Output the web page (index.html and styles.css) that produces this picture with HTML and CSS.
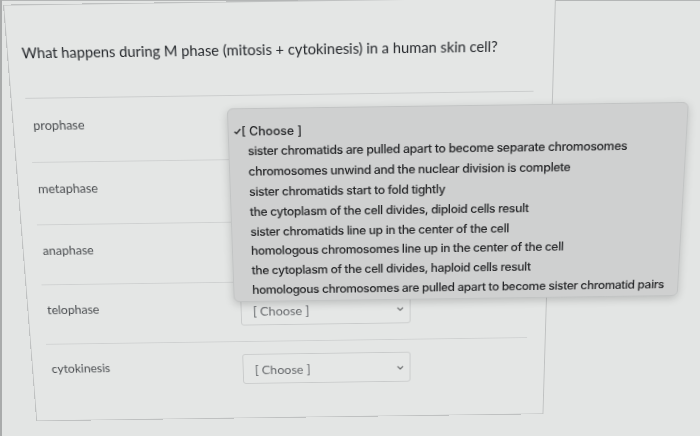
FILE: index.html
```html
<!DOCTYPE html>
<html>
<head>
<meta charset="utf-8">
<link rel="stylesheet" href="styles.css">
</head>
<body>
<div class="page">
  <div class="card">
    <div class="question">What happens during M phase (mitosis + cytokinesis) in a human skin cell?</div>
    <div class="rows">
      <div class="row">
        <div class="label">prophase</div>
        <div class="select"><span>[ Choose ]</span><svg class="chev" width="8" height="5" viewBox="0 0 8 5"><path d="M1 1 L4 4 L7 1" fill="none" stroke="#6d6f70" stroke-width="1.3"/></svg></div>
      </div>
      <div class="row">
        <div class="label">metaphase</div>
        <div class="select"><span>[ Choose ]</span><svg class="chev" width="8" height="5" viewBox="0 0 8 5"><path d="M1 1 L4 4 L7 1" fill="none" stroke="#6d6f70" stroke-width="1.3"/></svg></div>
      </div>
      <div class="row">
        <div class="label">anaphase</div>
        <div class="select"><span>[ Choose ]</span><svg class="chev" width="8" height="5" viewBox="0 0 8 5"><path d="M1 1 L4 4 L7 1" fill="none" stroke="#6d6f70" stroke-width="1.3"/></svg></div>
      </div>
      <div class="row">
        <div class="label">telophase</div>
        <div class="select"><span>[ Choose ]</span><svg class="chev" width="8" height="5" viewBox="0 0 8 5"><path d="M1 1 L4 4 L7 1" fill="none" stroke="#6d6f70" stroke-width="1.3"/></svg></div>
      </div>
      <div class="row last">
        <div class="label">cytokinesis</div>
        <div class="select"><span>[ Choose ]</span><svg class="chev" width="8" height="5" viewBox="0 0 8 5"><path d="M1 1 L4 4 L7 1" fill="none" stroke="#6d6f70" stroke-width="1.3"/></svg></div>
      </div>
    </div>
    <div class="menu">
      <div class="opt opt-selected"><svg class="check" width="8" height="7" viewBox="0 0 8 7"><path d="M1 3.8 L3 5.8 L7 1" fill="none" stroke="#2b2c2d" stroke-width="1.4"/></svg>[ Choose ]</div>
      <div class="opt">sister chromatids are pulled apart to become separate chromosomes</div>
      <div class="opt">chromosomes unwind and the nuclear division is complete</div>
      <div class="opt">sister chromatids start to fold tightly</div>
      <div class="opt">the cytoplasm of the cell divides, diploid cells result</div>
      <div class="opt">sister chromatids line up in the center of the cell</div>
      <div class="opt">homologous chromosomes line up in the center of the cell</div>
      <div class="opt">the cytoplasm of the cell divides, haploid cells result</div>
      <div class="opt">homologous chromosomes are pulled apart to become sister chromatid pairs</div>
    </div>
  </div>
</div>
</body>
</html>
```

FILE: styles.css
```css
html, body {
  margin: 0;
  padding: 0;
}
body {
  width: 700px;
  height: 436px;
  overflow: hidden;
  background: #e3e5e4;
  box-shadow: inset 2px 0 0 #a9abab, inset 0 1px 0 #b4b6b6;
  font-family: "Lato", "Open Sans", sans-serif;
}
.page {
  width: 700px;
  height: 436px;
}
.card {
  position: relative;
  box-sizing: border-box;
  margin-left: 3px;
  width: 553px;
  height: 458px;
  border: 1px solid #bfc1c1;
  padding: 0 19px 0 16px;
  background: #e4e6e5;
  transform-origin: 331px 0;
  transform: rotate(-0.8deg) perspective(600px) rotateX(-6.8deg);
}
.question {
  box-sizing: border-box;
  height: 96px;
  margin-left: -2px;
  padding: 38px 0 0 0;
  font-size: 14.8px;
  line-height: 20px;
  color: #26292d;
  border-bottom: 1px solid #cbcdcd;
  white-space: nowrap;
}
.row {
  box-sizing: border-box;
  height: 67.8px;
  display: flex;
  align-items: flex-start;
  padding: 14px 0 0 4px;
  border-bottom: 1px solid #cfd1d1;
}
.row.last {
  border-bottom: none;
  height: 86px;
}
.label {
  width: 206px;
  flex: none;
  font-size: 13px;
  line-height: 29px;
  color: #4b4e51;
}
.select {
  box-sizing: border-box;
  width: 181px;
  height: 35px;
  border: 1px solid #c9cbcb;
  border-radius: 3px;
  display: flex;
  align-items: center;
  justify-content: space-between;
  padding: 2px 6px 0 12px;
  font-size: 13.5px;
  color: #66696c;
  background: #e5e7e6;
}
.chev {
  display: block;
}
.menu {
  position: absolute;
  top: 108.7px;
  left: 219px;
  width: 472px;
  height: 212px;
  box-sizing: border-box;
  padding: 13px 0 0 19px;
  background: #cfd0d0;
  border: 1px solid #c2c4c4;
  border-radius: 6px;
  box-shadow: 0 3px 10px rgba(0, 0, 0, 0.18);
  font-family: "Inter", "Liberation Sans", sans-serif;
  font-size: 12.6px;
  font-weight: 500;
  letter-spacing: -0.35px;
  color: #232426;
}
.opt {
  line-height: 21.8px;
  white-space: nowrap;
}
.opt-selected {
  margin-left: -14px;
  display: flex;
  align-items: center;
  letter-spacing: 0;
}
.check {
  display: block;
  margin-right: 0;
}
```
